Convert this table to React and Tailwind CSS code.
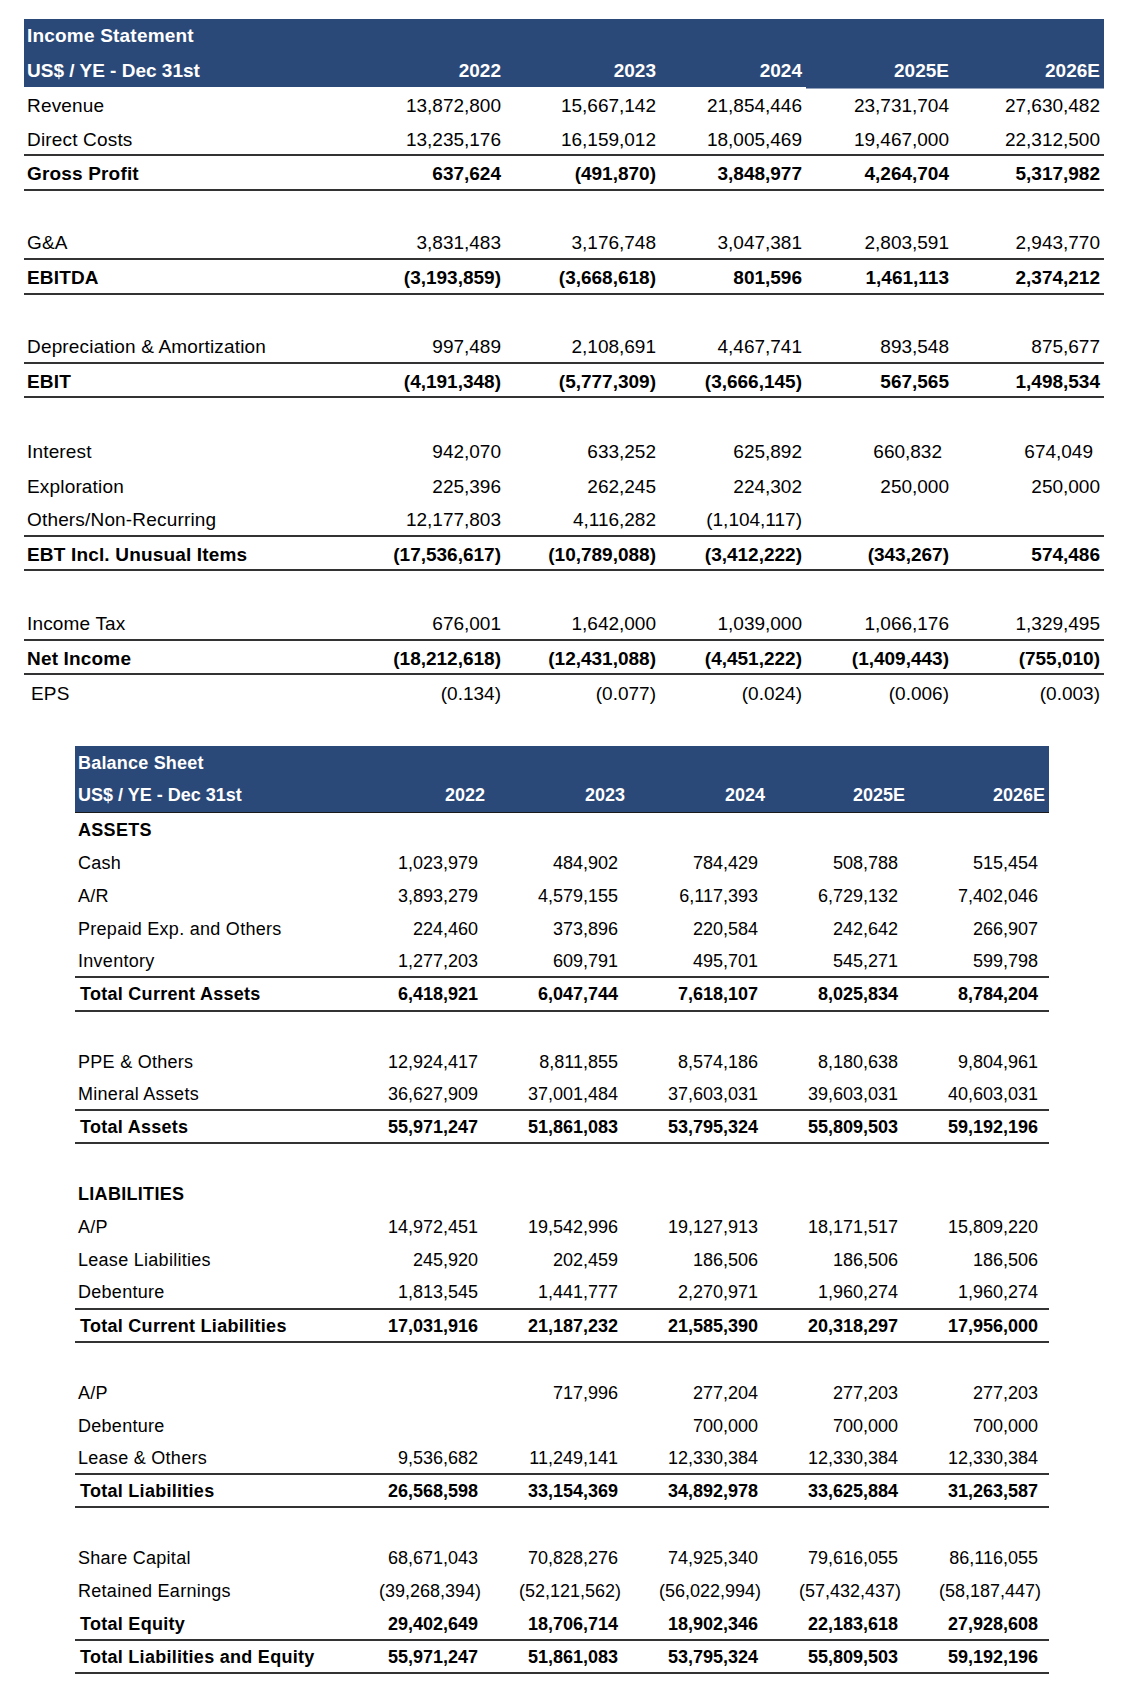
import React from "react";

const NAVY = "bg-[#2b4978]";

const income = [
  { l: "Revenue", v: ["13,872,800", "15,667,142", "21,854,446", "23,731,704", "27,630,482"] },
  { l: "Direct Costs", v: ["13,235,176", "16,159,012", "18,005,469", "19,467,000", "22,312,500"], b: true },
  { l: "Gross Profit", v: ["637,624", "(491,870)", "3,848,977", "4,264,704", "5,317,982"], bold: true, b: true },
  { blank: true },
  { l: "G&A", v: ["3,831,483", "3,176,748", "3,047,381", "2,803,591", "2,943,770"], b: true },
  { l: "EBITDA", v: ["(3,193,859)", "(3,668,618)", "801,596", "1,461,113", "2,374,212"], bold: true, b: true },
  { blank: true },
  { l: "Depreciation & Amortization", v: ["997,489", "2,108,691", "4,467,741", "893,548", "875,677"], b: true },
  { l: "EBIT", v: ["(4,191,348)", "(5,777,309)", "(3,666,145)", "567,565", "1,498,534"], bold: true, b: true },
  { blank: true },
  { l: "Interest", v: ["942,070", "633,252", "625,892", "660,832", "674,049"], shift: [false, false, false, true, true] },
  { l: "Exploration", v: ["225,396", "262,245", "224,302", "250,000", "250,000"] },
  { l: "Others/Non-Recurring", v: ["12,177,803", "4,116,282", "(1,104,117)", "", ""], b: true },
  { l: "EBT Incl. Unusual Items", v: ["(17,536,617)", "(10,789,088)", "(3,412,222)", "(343,267)", "574,486"], bold: true, b: true },
  { blank: true },
  { l: "Income Tax", v: ["676,001", "1,642,000", "1,039,000", "1,066,176", "1,329,495"], b: true },
  { l: "Net Income", v: ["(18,212,618)", "(12,431,088)", "(4,451,222)", "(1,409,443)", "(755,010)"], bold: true, b: true },
  { l: "EPS", v: ["(0.134)", "(0.077)", "(0.024)", "(0.006)", "(0.003)"], indent: true },
];

const balance = [
  { l: "ASSETS", head: true },
  { l: "Cash", v: ["1,023,979", "484,902", "784,429", "508,788", "515,454"] },
  { l: "A/R", v: ["3,893,279", "4,579,155", "6,117,393", "6,729,132", "7,402,046"] },
  { l: "Prepaid Exp. and Others", v: ["224,460", "373,896", "220,584", "242,642", "266,907"] },
  { l: "Inventory", v: ["1,277,203", "609,791", "495,701", "545,271", "599,798"], b: true },
  { l: "Total Current Assets", v: ["6,418,921", "6,047,744", "7,618,107", "8,025,834", "8,784,204"], bold: true, b: true },
  { blank: true },
  { l: "PPE & Others", v: ["12,924,417", "8,811,855", "8,574,186", "8,180,638", "9,804,961"] },
  { l: "Mineral Assets", v: ["36,627,909", "37,001,484", "37,603,031", "39,603,031", "40,603,031"], b: true },
  { l: "Total Assets", v: ["55,971,247", "51,861,083", "53,795,324", "55,809,503", "59,192,196"], bold: true, b: true },
  { blank: true },
  { l: "LIABILITIES", head: true },
  { l: "A/P", v: ["14,972,451", "19,542,996", "19,127,913", "18,171,517", "15,809,220"] },
  { l: "Lease Liabilities", v: ["245,920", "202,459", "186,506", "186,506", "186,506"] },
  { l: "Debenture", v: ["1,813,545", "1,441,777", "2,270,971", "1,960,274", "1,960,274"], b: true },
  { l: "Total Current Liabilities", v: ["17,031,916", "21,187,232", "21,585,390", "20,318,297", "17,956,000"], bold: true, b: true },
  { blank: true },
  { l: "A/P", v: ["", "717,996", "277,204", "277,203", "277,203"] },
  { l: "Debenture", v: ["", "", "700,000", "700,000", "700,000"] },
  { l: "Lease & Others", v: ["9,536,682", "11,249,141", "12,330,384", "12,330,384", "12,330,384"], b: true },
  { l: "Total Liabilities", v: ["26,568,598", "33,154,369", "34,892,978", "33,625,884", "31,263,587"], bold: true, b: true },
  { blank: true },
  { l: "Share Capital", v: ["68,671,043", "70,828,276", "74,925,340", "79,616,055", "86,116,055"] },
  { l: "Retained Earnings", v: ["(39,268,394)", "(52,121,562)", "(56,022,994)", "(57,432,437)", "(58,187,447)"] },
  { l: "Total Equity", v: ["29,402,649", "18,706,714", "18,902,346", "22,183,618", "27,928,608"], bold: true, b: true },
  { l: "Total Liabilities and Equity", v: ["55,971,247", "51,861,083", "53,795,324", "55,809,503", "59,192,196"], bold: true, b: true },
];

const years = ["2022", "2023", "2024", "2025E", "2026E"];

function IncomeTable() {
  const grid = "grid grid-cols-[331px_150px_155px_146px_147px_151px]";
  return (
    <div className="ml-[24px] w-[1080px] text-[19px] text-black">
      <div className={`${NAVY} text-white font-bold`}>
        <div className={`${grid} h-[34px] items-center`}>
          <div className="pl-[3px] pt-[1px] tracking-[0.2px]">Income Statement</div>
        </div>
        <div className={`${grid} h-[34px] items-center`}>
          <div className="pl-[3px] pt-[3px]">US$ / YE - Dec 31st</div>
          {years.map((y, i) => (
            <div
              key={y}
              className={`h-full flex items-center justify-end pr-[4px] pt-[3px] ${i >= 3 ? "shadow-[0_1.5px_0_#2b4978]" : ""}`}
            >
              {y}
            </div>
          ))}
        </div>
      </div>
      {income.map((r, idx) =>
        r.blank ? (
          <div key={idx} className="h-[34.6px]" />
        ) : (
          <div
            key={idx}
            className={`${grid} h-[34.6px] items-center pt-[4px] ${r.b ? "border-b-2 border-[#333333]" : ""} ${r.bold ? "font-bold" : ""}`}
          >
            <div className={`tracking-[0.17px] ${r.indent ? "pl-[7px]" : "pl-[3px]"}`}>{r.l}</div>
            {r.v.map((v, i) => (
              <div key={i} className={`text-right ${r.shift && r.shift[i] ? "pr-[11px]" : "pr-[4px]"}`}>
                {v}
              </div>
            ))}
          </div>
        )
      )}
    </div>
  );
}

function BalanceTable() {
  const grid = "grid grid-cols-[274px_140px_140px_140px_140px_140px]";
  return (
    <div className="ml-[75px] w-[974px] text-[18px] text-black">
      <div className={`${NAVY} text-white font-bold border-b border-[#1a1a1a]`}>
        <div className={`${grid} h-[33.1px] items-center`}>
          <div className="pl-[3px] pt-[2px] tracking-[0.2px]">Balance Sheet</div>
        </div>
        <div className={`${grid} h-[33.1px] items-center`}>
          <div className="pl-[3px]">US$ / YE - Dec 31st</div>
          {years.map((y) => (
            <div key={y} className="text-right pr-[4px]">
              {y}
            </div>
          ))}
        </div>
      </div>
      {balance.map((r, idx) => {
        if (r.blank) return <div key={idx} className="h-[33.12px]" />;
        if (r.head)
          return (
            <div key={idx} className={`${grid} h-[33.12px] items-center pt-[2px] font-bold`}>
              <div className="pl-[3px] tracking-[0.3px]">{r.l}</div>
            </div>
          );
        return (
          <div
            key={idx}
            className={`${grid} h-[33.12px] items-center pt-[2px] ${r.b ? "border-b-2 border-[#333333]" : ""} ${r.bold ? "font-bold" : ""}`}
          >
            <div className={`tracking-[0.28px] ${r.bold ? "pl-[5px]" : "pl-[3px]"}`}>{r.l}</div>
            {r.v.map((v, i) => (
              <div key={i} className={`text-right ${v.startsWith("(") ? "pr-[8px]" : "pr-[11px]"}`}>
                {v}
              </div>
            ))}
          </div>
        );
      })}
    </div>
  );
}

export default function App() {
  return (
    <div
      className="w-[1124px] min-h-[1688px] bg-white pt-[19px]"
      style={{ fontFamily: '"Liberation Sans", Arial, sans-serif' }}
    >
      <IncomeTable />
      <div className="h-[36px]" />
      <BalanceTable />
    </div>
  );
}
